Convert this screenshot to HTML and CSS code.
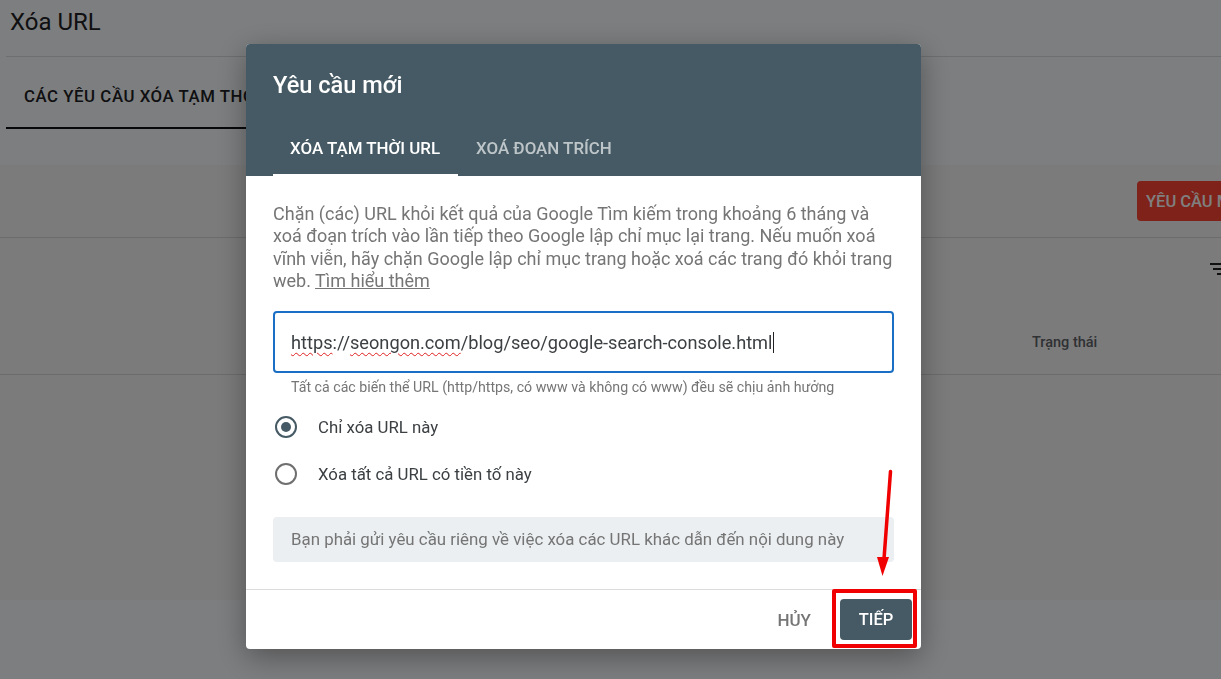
FILE: index.html
```html
<!DOCTYPE html>
<html lang="vi">
<head>
    <meta charset="utf-8">
    <title>Xóa URL</title>
    <link rel="stylesheet" href="styles.css">
</head>
<body>

<div class="page">
    <div class="page-title">Xóa URL</div>
    <div class="page-tabs">
        <div class="page-tab">Các yêu cầu xóa tạm thời</div>
    </div>
    <div class="card">
        <div class="card-top">
            <button class="new-request">Yêu cầu mới</button>
        </div>
        <div class="card-filter">
            <svg class="filter-icon" width="24" height="24" viewBox="0 0 24 24"><path d="M3 6h18v2H3zM6 11h12v2H6zM10 16h4v2h-4z" fill="#212121"/></svg>
        </div>
        <div class="card-head">
            <span class="col-status">Trạng thái</span>
        </div>
    </div>
</div>

<div class="overlay"></div>

<div class="dialog">
    <div class="dialog-head">
        <div class="dialog-title">Yêu cầu mới</div>
        <div class="dialog-tabs">
            <div class="dialog-tab active">Xóa tạm thời URL</div>
            <div class="dialog-tab">Xoá đoạn trích</div>
        </div>
    </div>
    <div class="dialog-body">
        <p class="intro">Chặn (các) URL khỏi kết quả của Google Tìm kiếm trong khoảng 6 tháng và xoá đoạn trích vào lần tiếp theo Google lập chỉ mục lại trang. Nếu muốn xoá vĩnh viễn, hãy chặn Google lập chỉ mục trang hoặc xoá các trang đó khỏi trang web. <a href="#">Tìm hiểu thêm</a></p>
        <div class="url-input"><span class="typo">https</span>://<span class="typo">seongon.com</span>/blog/seo/google-search-console.html<span class="caret"></span></div>
        <div class="url-help">Tất cả các biến thể URL (http/https, có www và không có www) đều sẽ chịu ảnh hưởng</div>
        <div class="radio-group">
            <div class="radio-row">
                <span class="radio checked"></span>
                <span>Chỉ xóa URL này</span>
            </div>
            <div class="radio-row">
                <span class="radio"></span>
                <span>Xóa tất cả URL có tiền tố này</span>
            </div>
        </div>
        <div class="note">Bạn phải gửi yêu cầu riêng về việc xóa các URL khác dẫn đến nội dung này</div>
    </div>
    <div class="dialog-foot">
        <button class="btn-cancel">Hủy</button>
        <button class="btn-next">Tiếp</button>
    </div>
</div>

<!-- red markup drawn over the screenshot -->
<div class="mark-box"></div>
<svg class="mark-arrow" width="30" height="120" viewBox="0 0 30 120">
    <path d="M20.5 2.5 L14 90" stroke="#f00000" stroke-width="3.5" stroke-linecap="round" fill="none"/>
    <path d="M7 88 L19 88 L12.5 107 Z" fill="#f00000"/>
</svg>

</body>
</html>
```

FILE: styles.css
```css
* {
    box-sizing: border-box;
}
html, body {
    height: 100%;
}
body {
    margin: 0;
    font-family: Roboto, "Liberation Sans", sans-serif;
    color: #202124;
    background: #fbfdff;
    overflow: hidden;
}
button {
    font-family: inherit;
    border: none;
    cursor: pointer;
}

/* page behind the dialog */
.page {
    padding-left: 6px;
}
.page-title {
    height: 57px;
    padding: 8px 0 0 4px;
    font-size: 24px;
    line-height: 29px;
    border-bottom: 1px solid #dadce0;
}
.page-tabs {
    height: 72px;
}
.page-tab {
    width: 300px;
    height: 72px;
    padding: 29px 0 0 18px;
    font-size: 16.8px;
    line-height: 20px;
    font-weight: 500;
    letter-spacing: 0.55px;
    text-transform: uppercase;
    white-space: nowrap;
    overflow: hidden;
    border-bottom: 2px solid #111;
}
.card {
    height: 435px;
    margin-top: 36px;
    margin-left: -6px;
    background: #f7f7f7;
}
.card-top {
    height: 73px;
    padding-top: 16px;
    display: flex;
    justify-content: flex-end;
    border-bottom: 1px solid #d8d8d8;
    overflow: hidden;
}
.new-request {
    width: 84px;
    height: 40px;
    padding: 0 0 0 9px;
    background: #fe4533;
    color: #fff;
    font-size: 16.5px;
    font-weight: 500;
    text-transform: uppercase;
    text-align: left;
    white-space: nowrap;
    overflow: hidden;
    border-radius: 4px 0 0 4px;
}
.card-filter {
    height: 60px;
    padding-top: 19px;
    display: flex;
    justify-content: flex-end;
}
.filter-icon {
    margin-right: -10px;
}
.card-head {
    height: 77px;
    padding: 35px 0 0 1032px;
    font-size: 14.5px;
    line-height: 20px;
    font-weight: 500;
    color: #5f6368;
    border-bottom: 1px solid #d8d8d8;
}

.overlay {
    position: fixed;
    inset: 0;
    background: rgba(0, 0, 0, 0.5);
}

/* dialog */
.dialog {
    position: fixed;
    left: 246px;
    top: 44px;
    width: 675px;
    height: 605px;
    background: #fff;
    border-radius: 4px;
    box-shadow: 0 8px 30px rgba(0, 0, 0, 0.35);
    display: flex;
    flex-direction: column;
    overflow: hidden;
}
.dialog-head {
    height: 132px;
    padding: 25px 27px 0;
    background: #455a64;
    color: #fff;
}
.dialog-title {
    height: 53px;
    font-size: 23.6px;
    line-height: 32px;
    font-weight: 500;
}
.dialog-tabs {
    display: flex;
    gap: 1px;
}
.dialog-tab {
    height: 54px;
    padding: 15px 18px 0 17px;
    font-size: 16.9px;
    line-height: 22px;
    font-weight: 500;
    text-transform: uppercase;
    color: rgba(255, 255, 255, 0.65);
}
.dialog-tab.active {
    color: #fff;
    border-bottom: 2px solid #fff;
}
.dialog-body {
    flex: 1;
    padding: 27px 27px 0 27px;
}
.intro {
    margin: 0;
    font-size: 18px;
    line-height: 22.4px;
    color: #757575;
}
.intro a {
    color: #757575;
}
.url-input {
    height: 62px;
    margin-top: 18px;
    padding: 18px 16px 0;
    border: 2px solid #1a6fc4;
    border-radius: 4px;
    font-size: 18.2px;
    line-height: 24px;
    color: #3c4043;
    white-space: nowrap;
}
.typo {
    text-decoration: underline wavy #e02020 1px;
    text-underline-offset: 3px;
}
.caret {
    display: inline-block;
    width: 1px;
    height: 21px;
    margin-left: 1px;
    vertical-align: -4px;
    background: #202124;
}
.url-help {
    margin-top: 5px;
    padding-left: 18px;
    font-size: 14.2px;
    line-height: 18px;
    color: #757575;
}
.radio-group {
    margin-top: 8px;
}
.radio-row {
    height: 47px;
    display: flex;
    align-items: center;
    gap: 21px;
    padding-left: 2px;
    font-size: 16.8px;
    color: #3c4043;
}
.radio {
    position: relative;
    width: 22px;
    height: 22px;
    border: 2px solid #6f6f6f;
    border-radius: 50%;
    flex: none;
}
.radio.checked {
    border-color: #455a64;
}
.radio.checked::after {
    content: "";
    position: absolute;
    left: 4px;
    top: 4px;
    width: 10px;
    height: 10px;
    border-radius: 50%;
    background: #455a64;
}
.note {
    height: 45px;
    margin-top: 19px;
    padding-left: 18px;
    background: #ebeff1;
    border-radius: 4px;
    font-size: 16.86px;
    line-height: 45px;
    color: #757575;
    white-space: nowrap;
}
.dialog-foot {
    height: 60px;
    padding: 9px 9px 0 0;
    display: flex;
    justify-content: flex-end;
    align-items: flex-start;
    gap: 29px;
    border-top: 1px solid #dadce0;
}
.btn-cancel {
    height: 41px;
    padding: 0;
    background: none;
    color: #757575;
    font-size: 17px;
    font-weight: 500;
    text-transform: uppercase;
}
.btn-next {
    width: 72px;
    height: 41px;
    background: #455a64;
    color: #fff;
    font-size: 16.5px;
    font-weight: 500;
    text-transform: uppercase;
    border-radius: 4px;
}

/* annotation */
.mark-box {
    position: fixed;
    left: 832px;
    top: 589px;
    width: 85px;
    height: 59px;
    border: 4px solid #f00000;
    border-radius: 2px;
}
.mark-arrow {
    position: fixed;
    left: 870px;
    top: 469px;
}
```
